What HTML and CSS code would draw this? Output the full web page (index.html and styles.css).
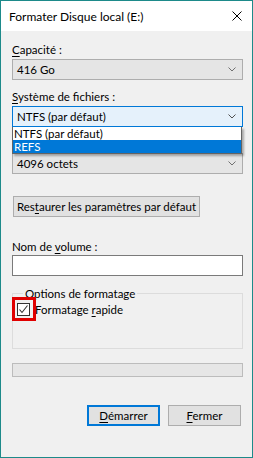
FILE: index.html
```html
<!DOCTYPE html>
<html lang="fr">
<head>
<meta charset="UTF-8">
<title>Formater Disque local (E:)</title>
<link rel="stylesheet" href="styles.css">
</head>
<body>
<div class="window">
  <div class="titlebar">
    <span class="title">Formater Disque local (E:)</span>
    <svg class="close" width="10" height="10" viewBox="0 0 10 10"><path d="M0.5 0.5L9.5 9.5M9.5 0.5L0.5 9.5" stroke="#000" stroke-width="1"/></svg>
  </div>

  <div class="content">
    <div class="label"><u>C</u>apacité :</div>
    <div class="combo"><span>416 Go</span><svg class="chev" width="8" height="5" viewBox="0 0 8 5"><path d="M0.5 0.5L4 4L7.5 0.5" fill="none" stroke="#707070"/></svg></div>

    <div class="label gap"><u>S</u>ystème de fichiers :</div>
    <div class="dropdown">
      <div class="combo focus"><span>NTFS (par défaut)</span><svg class="chev" width="8" height="5" viewBox="0 0 8 5"><path d="M0.5 0.5L4 4L7.5 0.5" fill="none" stroke="#505050"/></svg></div>
      <ul class="list">
        <li>NTFS (par défaut)</li>
        <li class="sel">REFS</li>
      </ul>
    </div>

    <!-- label of the allocation size, hidden under the open list -->
    <div class="label gap covered"></div>
    <div class="combo"><span>4096 octets</span><svg class="chev" width="8" height="5" viewBox="0 0 8 5"><path d="M0.5 0.5L4 4L7.5 0.5" fill="none" stroke="#707070"/></svg></div>

    <button class="btn restore">Res<u>t</u>aurer les paramètres par défaut</button>

    <div class="label vol">Nom de <u>v</u>olume :</div>
    <div class="textbox"></div>

    <fieldset class="group">
      <legend>Options de formatage</legend>
      <label class="check">
        <span class="box"><svg width="11" height="11" viewBox="0 0 11 11"><path d="M1.5 5.5L4 8.5L9.5 1.5" fill="none" stroke="#333" stroke-width="1.1"/></svg></span>
        <span class="check-text">Formatage <u>r</u>apide</span>
        <span class="mark"></span>
      </label>
    </fieldset>

    <div class="progress"></div>

    <div class="actions">
      <button class="btn default"><u>D</u>émarrer</button>
      <button class="btn"><u>F</u>ermer</button>
    </div>
  </div>
</div>
</body>
</html>
```

FILE: styles.css
```css
*{box-sizing:border-box;margin:0;padding:0}
body{background:#fff;font-family:Lato,"Liberation Sans",sans-serif;font-size:11.5px;color:#000}
u{text-decoration:underline;text-underline-offset:2px}

.window{width:253px;height:458px;border:1px solid #1d8a8a;background:#f0f0f0;display:flex;flex-direction:column}
.titlebar{height:30px;background:#fff;display:flex;align-items:center;justify-content:space-between;padding:0 10px 0 8px}
.title{font-size:12px;line-height:15px}
.close{display:block}

.content{padding:11px 9px 0 11px;display:flex;flex-direction:column}
.label{line-height:15px;margin-bottom:2px}
.label.gap{margin-top:9px}
.label.covered{height:15px}
.label.vol{margin-top:22px;margin-bottom:1px}

.combo{height:21px;border:1px solid #adadad;background:#e5e5e5;display:flex;align-items:center;justify-content:space-between;padding:0 6px 0 4px}
.combo.focus{border-color:#0078d7;background:#e5f1fb}
.chev{display:block}

.dropdown{position:relative}
.list{position:absolute;left:0;top:100%;width:230px;list-style:none;background:#fff;border:1px solid #646464;border-top:0;box-shadow:2px 2px 2px rgba(0,0,0,.3);z-index:2}
.list li{height:13px;line-height:13px;padding-left:1px}
.list li.sel{background:#0078d7;color:#fff}

.btn{font:inherit;color:#000;height:21px;border:1px solid #adadad;background:#e1e1e1;line-height:17px;padding:0;white-space:nowrap}
.restore{width:187px;margin:22px 0 0 1px;align-self:flex-start}

.textbox{height:21px;border:1px solid #7a7a7a;background:#fff}

.group{margin-top:10px;border:1px solid #dcdcdc;padding:0 0 31px 4px}
.group legend{margin-left:6px;padding:0 2px;line-height:15px}
.check{position:relative;display:flex;align-items:center;line-height:15px;margin-top:1px}
.box{width:13px;height:13px;border:1px solid #333;background:#fff;display:flex;align-items:center;justify-content:center;margin-right:5px}
.mark{position:absolute;left:-5px;top:-5px;width:24px;height:24px;border:3px solid #e00000}

.progress{margin-top:14px;height:14px;border:1px solid #bcbcbc;background:#e6e6e6}

.actions{display:flex;justify-content:flex-end;gap:8px;margin:28px 2px 0 0}
.actions .btn{width:73px;height:21px}
.btn.default{border:2px solid #0078d7;line-height:15px}
```
